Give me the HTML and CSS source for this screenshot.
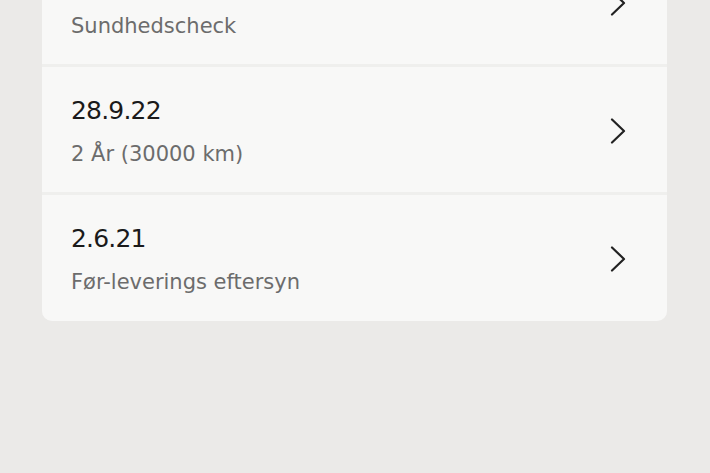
FILE: index.html
```html
<!DOCTYPE html>
<html lang="da">
<head>
<meta charset="utf-8">
<title>Service historik</title>
<link rel="stylesheet" href="styles.css">
</head>
<body>
<main class="page">
  <ul class="list">
    <li class="row">
      <div class="text">
        <div class="title">15.3.23</div>
        <div class="sub">Sundhedscheck</div>
      </div>
      <svg class="chev" viewBox="0 0 16 26" width="16" height="26"><path d="M2 1.5 L14 13 L2 24.5" fill="none" stroke="#222" stroke-width="2.2" stroke-linecap="round" stroke-linejoin="round"/></svg>
    </li>
    <li class="row">
      <div class="text">
        <div class="title">28.9.22</div>
        <div class="sub">2 År (30000 km)</div>
      </div>
      <svg class="chev" viewBox="0 0 16 26" width="16" height="26"><path d="M2 1.5 L14 13 L2 24.5" fill="none" stroke="#222" stroke-width="2.2" stroke-linecap="round" stroke-linejoin="round"/></svg>
    </li>
    <li class="row">
      <div class="text">
        <div class="title">2.6.21</div>
        <div class="sub">Før-leverings eftersyn</div>
      </div>
      <svg class="chev" viewBox="0 0 16 26" width="16" height="26"><path d="M2 1.5 L14 13 L2 24.5" fill="none" stroke="#222" stroke-width="2.2" stroke-linecap="round" stroke-linejoin="round"/></svg>
    </li>
  </ul>
</main>
</body>
</html>
```
FILE: styles.css
```css
html, body {
  margin: 0;
  padding: 0;
  background: #ebeae8;
  height: 100%;
  overflow: hidden;
}
.page {
  padding: 0 43px 0 42px;
  font-family: "DejaVu Sans", "Open Sans", sans-serif;
}
.list {
  list-style: none;
  margin: -61px 0 0 0;
  padding: 0;
  display: flex;
  flex-direction: column;
  gap: 3px;
  background: #efefed;
  border-radius: 10px;
  overflow: hidden;
}
.row {
  height: 125px;
  box-sizing: border-box;
  background: #f8f8f7;
  display: flex;
  align-items: center;
  justify-content: space-between;
  padding: 0 41px 0 29px;
}
.row:last-child {
  height: 126px;
}
.text {
  display: flex;
  flex-direction: column;
  padding-top: 3px;
}
.title {
  font-size: 25px;
  line-height: 32px;
  letter-spacing: -0.8px;
  color: #1a1a1a;
}
.sub {
  margin-top: 13px;
  font-size: 21px;
  line-height: 28px;
  color: #6c6c6c;
}
.chev {
  display: block;
  margin-top: 2px;
}
```
